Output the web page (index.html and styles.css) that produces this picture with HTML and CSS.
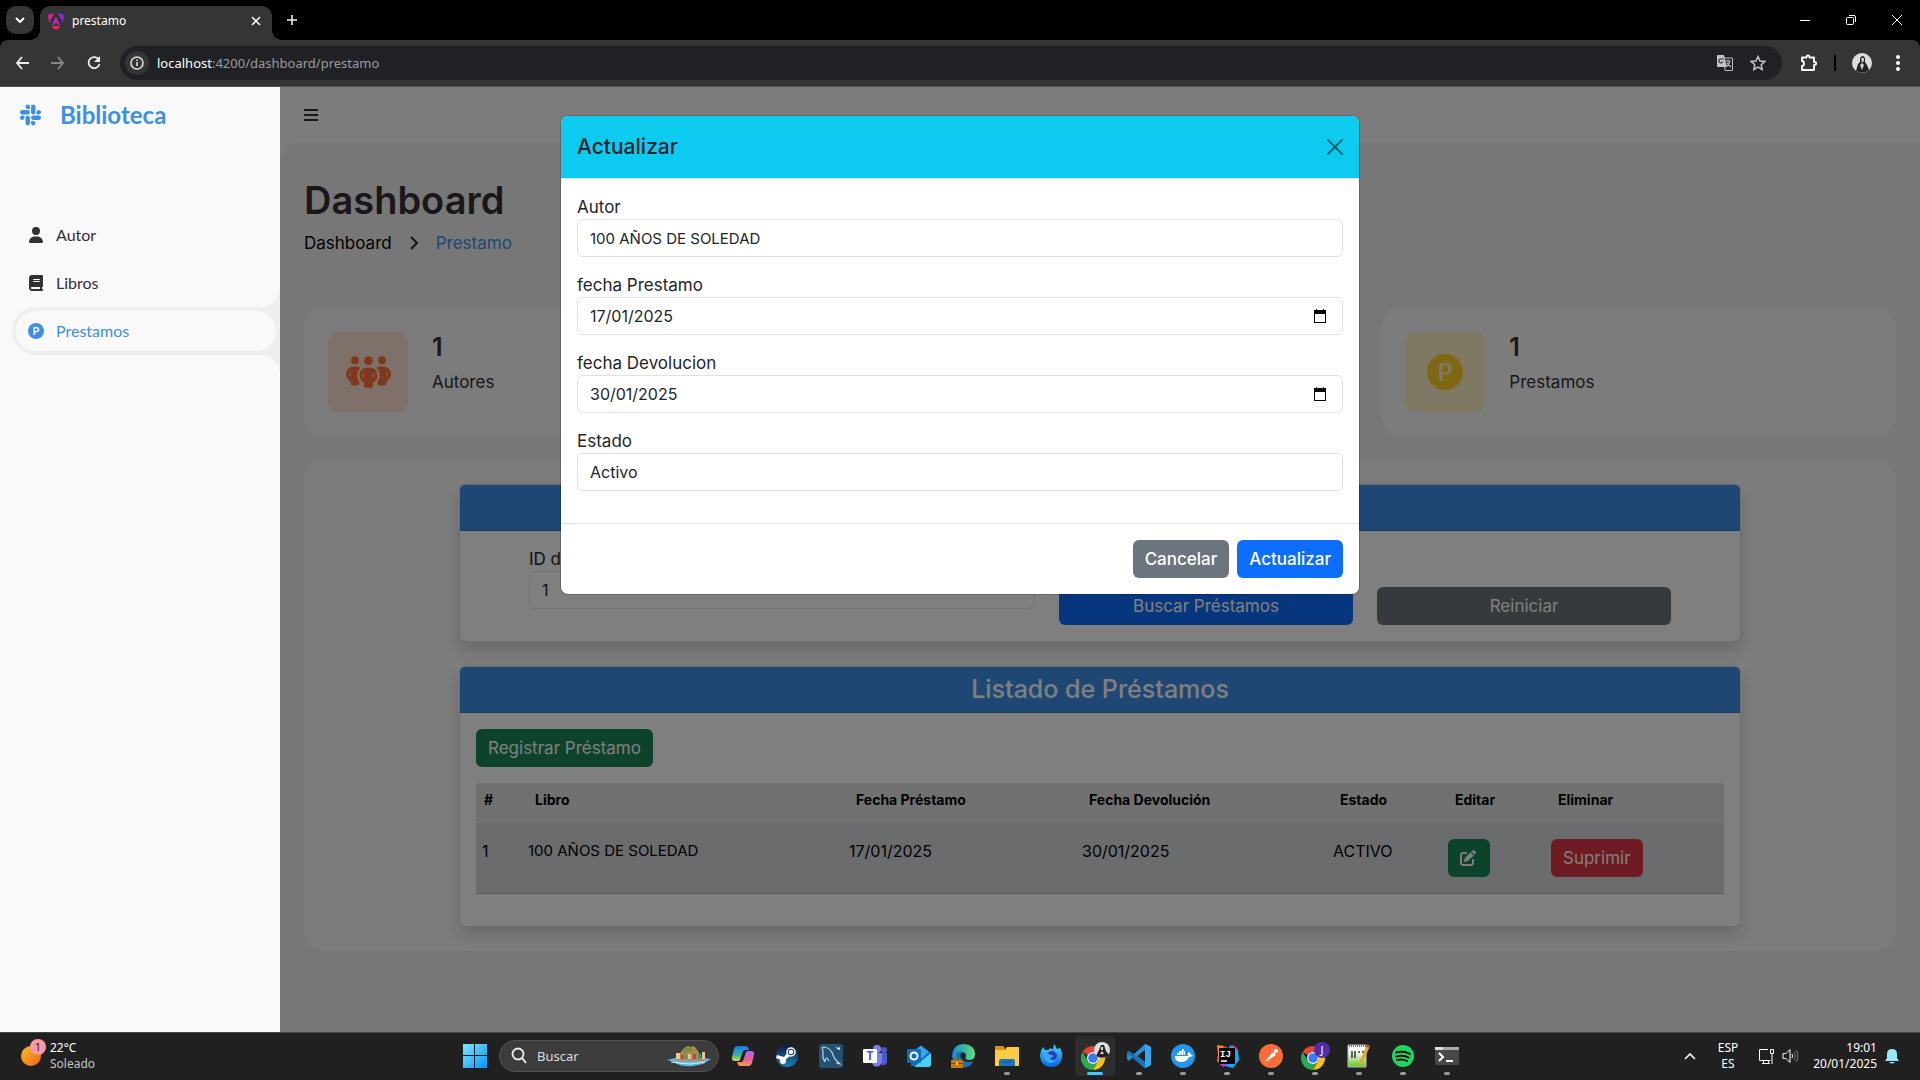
FILE: index.html
```html
<!DOCTYPE html>
<html lang="es">
<head>
<meta charset="utf-8">
<meta name="viewport" content="width=device-width, initial-scale=1">
<title>prestamo</title>
<link rel="stylesheet" href="styles.css">
</head>
<body>
<header class="browser">
  <div class="tabstrip">
    <button class="tab-search" aria-label="Buscar pestañas"><svg width="10" height="6" viewBox="0 0 10 6"><path d="M1 1l4 4 4-4" fill="none" stroke="#fff" stroke-width="2"/></svg></button>
    <div class="tab">
      <svg width="18" height="18" viewBox="0 0 18 18"><defs><linearGradient id="ng" x1="0" x2="1"><stop offset="0" stop-color="#f0168a"/><stop offset=".5" stop-color="#e01cc8"/><stop offset="1" stop-color="#6a2cf5"/></linearGradient></defs><path d="M7 1 1 3l1 8 5-10zM11 1l6 2-1 8L11 1zM9 5l-4 8h2l1-2h2l1 2h2L9 5z" fill="url(#ng)"/><path d="M5 14h8l-1 2-3 2-3-2z" fill="#fb1e50"/></svg>
      <span class="tab-title">prestamo</span>
      <button class="plain" aria-label="Cerrar pestaña"><svg width="10" height="10" viewBox="0 0 10 10"><path d="M1 1l8 8M9 1L1 9" stroke="#eee" stroke-width="1.6"/></svg></button>
    </div>
    <button class="plain new-tab" aria-label="Nueva pestaña"><svg width="12" height="12" viewBox="0 0 12 12"><path d="M6 1v10M1 6h10" stroke="#eee" stroke-width="1.6"/></svg></button>
    <div class="window-buttons">
      <button class="plain" aria-label="Minimizar"><svg width="12" height="12" viewBox="0 0 12 12"><path d="M1 6.500h10" stroke="#fff"/></svg></button>
      <button class="plain" aria-label="Restaurar"><svg width="12" height="12" viewBox="0 0 12 12"><g fill="none" stroke="#fff"><rect x="1.500" y="3.500" width="7" height="7" rx="1"/><path d="M4 1.500h5q1.500 0 1.500 1.500v5"/></g></svg></button>
      <button class="plain" aria-label="Cerrar"><svg width="12" height="12" viewBox="0 0 12 12"><path d="M1 1l10 10M11 1L1 11" stroke="#fff"/></svg></button>
    </div>
  </div>
  <div class="toolbar">
    <button class="plain tool" aria-label="Atrás"><svg width="14" height="14" viewBox="0 0 14 14"><path d="M7 1L2 7l5 6M2 7h12" fill="none" stroke="#eee" stroke-width="1.800"/></svg></button>
    <button class="plain tool" aria-label="Adelante"><svg width="14" height="14" viewBox="0 0 14 14"><path d="M7 1l5 6-5 6M12 7H0" fill="none" stroke="#888" stroke-width="1.800"/></svg></button>
    <button class="plain tool" aria-label="Recargar"><svg width="14" height="14" viewBox="0 0 14 14"><path d="M12 4A5.500 5.500 0 1 0 12.500 8" fill="none" stroke="#eee" stroke-width="1.800"/><path d="M13 0v6H7z" fill="#eee"/></svg></button>
    <div class="omnibox">
      <span class="site-info"><svg width="14" height="14" viewBox="0 0 14 14"><circle cx="7" cy="7" r="6" fill="none" stroke="#ddd" stroke-width="1.600"/><path d="M7 6v4M7 3.500v1.500" stroke="#ddd" stroke-width="1.600"/></svg></span>
      <span class="url"><b>localhost</b>:4200/dashboard/prestamo</span>
      <svg width="18" height="18" viewBox="0 0 18 18"><path d="M8 4h8.500v12.500H9z" fill="none" stroke="#bbb"/><path d="M1 1h7l3 12H2q-1 0-1-1z" fill="#c4c4c4"/><path d="M8 5H5.500a2 2 0 1 0 1 3H6" fill="none" stroke="#333" stroke-width="1.200"/><path d="M9.500 7h5M12 5.500v2M14 7q-1 4-4 6M11 9l4 4" stroke="#bbb" fill="none" stroke-width="1.200"/></svg>
      <svg width="16" height="16" viewBox="0 0 16 16"><path d="M8 1.500l2 4.500 4.800.5-3.600 3.200 1 4.800L8 12l-4.200 2.500 1-4.800L1.200 6.500 6 6z" fill="none" stroke="#c4c4c4" stroke-width="1.500"/></svg>
    </div>
    <div class="toolbar-end">
      <svg width="18" height="18" viewBox="0 0 18 18"><path d="M2 3.500h4.500q0-2 1.500-2t1.500 2H14V8q2.200 0 2.200 1.500T14 11v5H2v-4q2 0 2-2.500T2 7z" fill="none" stroke="#fff" stroke-width="1.800" stroke-linejoin="round"/></svg>
      <span class="divider"></span>
      <svg width="20" height="20" viewBox="0 0 20 20"><circle cx="10" cy="10" r="10" fill="#ddd"/><path d="M4 18l2-7 2-2V5q3-4 5 0v4l2 3 2 5q-6 5-13 1z" fill="#222"/><path d="M9 5h3v3l-2 2zM8 12l2-2 2 2-2 5z" fill="#ccc"/></svg>
      <svg width="4" height="16" viewBox="0 0 4 16" fill="#fff"><circle cx="2" cy="2" r="2"/><circle cx="2" cy="8" r="2"/><circle cx="2" cy="14" r="2"/></svg>
    </div>
  </div>
</header>

<div class="app">
  <aside class="sidebar">
    <a class="brand" href="#"><svg width="21" height="24" viewBox="0 0 448 512" fill="currentColor"><path d="M94.120 315.100c0 25.900-21.160 47.060-47.060 47.060S0 341 0 315.100c0-25.900 21.160-47.060 47.060-47.060h47.060v47.060zm23.720 0c0-25.900 21.160-47.060 47.060-47.060s47.060 21.160 47.060 47.060v117.840c0 25.900-21.160 47.060-47.060 47.060s-47.060-21.160-47.060-47.060V315.100zm47.060-188.980c-25.900 0-47.060-21.160-47.060-47.060S139 32 164.900 32s47.060 21.160 47.060 47.060v47.060H164.900zm0 23.720c25.900 0 47.060 21.160 47.060 47.060s-21.160 47.060-47.060 47.060H47.060C21.160 243.960 0 222.800 0 196.900s21.160-47.060 47.060-47.060H164.900zm188.980 47.060c0-25.900 21.160-47.060 47.060-47.060 25.900 0 47.060 21.160 47.060 47.060s-21.160 47.060-47.060 47.060h-47.060V196.900zm-23.720 0c0 25.900-21.160 47.060-47.060 47.060-25.900 0-47.060-21.160-47.060-47.060V79.060c0-25.900 21.160-47.060 47.060-47.060 25.900 0 47.060 21.160 47.060 47.060V196.900zM283.100 385.880c25.900 0 47.060 21.160 47.060 47.060 0 25.900-21.160 47.060-47.060 47.060-25.900 0-47.060-21.160-47.060-47.060v-47.060h47.060zm0-23.720c-25.900 0-47.060-21.160-47.060-47.060 0-25.900 21.160-47.060 47.060-47.060h117.840c25.900 0 47.060 21.160 47.060 47.060 0 25.900-21.160 47.060-47.060 47.060H283.100z"/></svg><span>Biblioteca</span></a>
    <ul class="menu">
      <li><a href="#"><svg width="16" height="16" viewBox="-32 0 512 512" fill="currentColor"><path d="M224 256A128 128 0 1 0 224 0a128 128 0 1 0 0 256zm-45.700 48C79.800 304 0 383.800 0 482.300C0 498.700 13.300 512 29.700 512H418.300c16.400 0 29.700-13.300 29.700-29.700C448 383.800 368.200 304 269.700 304H178.300z"/></svg>Autor</a></li>
      <li><a href="#"><svg width="16" height="16" viewBox="-32 0 512 512" fill="currentColor"><path d="M96 0C43 0 0 43 0 96V416c0 53 43 96 96 96H384h32c17.700 0 32-14.300 32-32s-14.300-32-32-32V384c17.700 0 32-14.300 32-32V32c0-17.700-14.300-32-32-32H384 96zm0 384H352v64H96c-17.700 0-32-14.300-32-32s14.300-32 32-32zm32-240c0-8.800 7.200-16 16-16H336c8.800 0 16 7.200 16 16s-7.200 16-16 16H144c-8.800 0-16-7.200-16-16zm16 48H336c8.800 0 16 7.200 16 16s-7.200 16-16 16H144c-8.800 0-16-7.200-16-16s7.200-16 16-16z"/></svg>Libros</a></li>
      <li class="active"><a href="#"><svg width="16" height="16" viewBox="0 0 16 16"><circle cx="8" cy="8" r="8" fill="currentColor"/><text x="8" y="12" class="p-glyph" fill="#f9f9f9">P</text></svg>Prestamos</a></li>
    </ul>
  </aside>

  <div class="content">
    <nav class="topbar"><button class="plain" aria-label="Menú"><svg width="14" height="12" viewBox="0 0 14 12"><path d="M0 1h14M0 6h14M0 11h14" stroke="#342e37" stroke-width="2"/></svg></button></nav>
    <main>
      <h1>Dashboard</h1>
      <div class="breadcrumb"><a href="#">Dashboard</a><svg width="8" height="14" viewBox="0 0 8 14"><path d="M1 1l6 6-6 6" fill="none" stroke="#342e37" stroke-width="2"/></svg><a class="current" href="#">Prestamo</a></div>

      <ul class="stats">
        <li><span class="stat-icon orange"><svg width="45" height="36" viewBox="0 0 640 512" fill="currentColor"><path d="M72 88a56 56 0 1 1 112 0A56 56 0 1 1 72 88zM64 245.700C54 256.900 48 271.800 48 288s6 31.100 16 42.300V245.700zm144.400-49.300C178.700 222.700 160 261.200 160 304c0 34.300 12 65.800 32 90.500V416c0 17.700-14.300 32-32 32H96c-17.700 0-32-14.300-32-32V389.200C26.200 371.200 0 332.700 0 288c0-61.900 50.100-112 112-112h32c24 0 46.200 7.500 64.400 20.300zM448 416V394.500c20-24.700 32-56.200 32-90.500c0-42.800-18.700-81.300-48.400-107.700C449.800 183.500 472 176 496 176h32c61.900 0 112 50.100 112 112c0 44.700-26.200 83.200-64 101.200V416c0 17.700-14.300 32-32 32H480c-17.700 0-32-14.300-32-32zm8-328a56 56 0 1 1 112 0A56 56 0 1 1 456 88zM576 245.700v84.700c10-11.300 16-26.100 16-42.300s-6-31.100-16-42.300zM320 32a64 64 0 1 1 0 128 64 64 0 1 1 0-128zM240 304c0 16.200 6 31 16 42.300V261.700c-10 11.300-16 26.100-16 42.300zm144-42.300v84.700c10-11.300 16-26.100 16-42.300s-6-31.100-16-42.300zM448 304c0 44.700-26.200 83.200-64 101.200V448c0 17.700-14.300 32-32 32H288c-17.700 0-32-14.300-32-32V405.200c-37.800-18-64-56.500-64-101.200c0-61.900 50.100-112 112-112h32c61.900 0 112 50.100 112 112z"/></svg></span><div><h3>1</h3><p>Autores</p></div></li>
        <li></li>
        <li><span class="stat-icon yellow"><svg width="36" height="36" viewBox="0 0 16 16"><circle cx="8" cy="8" r="8" fill="currentColor"/><text x="8" y="12" class="p-glyph" fill="#fff2c6">P</text></svg></span><div><h3>1</h3><p>Prestamos</p></div></li>
      </ul>

      <section class="panel">
        <div class="card">
          <h4 class="card-header">Buscar Préstamos</h4>
          <form class="search-form">
            <div class="field search-id"><label for="libro-id">ID del Libro</label><input id="libro-id" class="control" type="text" value="1"></div>
            <button type="button" class="btn primary">Buscar Préstamos</button>
            <button type="button" class="btn secondary">Reiniciar</button>
          </form>
        </div>
        <div class="card">
          <h4 class="card-header">Listado de Préstamos</h4>
          <div class="card-body">
            <button type="button" class="btn success">Registrar Préstamo</button>
            <table>
              <colgroup><col class="c-num"><col class="c-book"><col class="c-loan"><col class="c-return"><col class="c-state"><col class="c-edit"><col></colgroup>
              <thead><tr><th>#</th><th>Libro</th><th>Fecha Préstamo</th><th>Fecha Devolución</th><th>Estado</th><th>Editar</th><th>Eliminar</th></tr></thead>
              <tbody><tr><td>1</td><td class="caps">100 AÑOS DE SOLEDAD</td><td>17/01/2025</td><td>30/01/2025</td><td>ACTIVO</td>
                <td><button type="button" class="btn success" aria-label="Editar"><svg width="16" height="16" viewBox="0 0 512 512" fill="currentColor"><path d="M471.600 21.700c-21.900-21.900-57.300-21.900-79.200 0L362.300 51.700l97.900 97.900 30.100-30.100c21.900-21.900 21.900-57.300 0-79.200L471.600 21.700zm-299.200 220c-6.100 6.100-10.800 13.600-13.500 21.900l-29.600 88.800c-2.900 8.600-.6 18.100 5.800 24.600s15.900 8.700 24.600 5.800l88.800-29.600c8.200-2.700 15.700-7.400 21.900-13.500L437.700 172.300 339.700 74.300 172.400 241.700zM96 64C43 64 0 107 0 160V416c0 53 43 96 96 96H352c53 0 96-43 96-96V320c0-17.700-14.300-32-32-32s-32 14.300-32 32v96c0 17.700-14.300 32-32 32H96c-17.700 0-32-14.300-32-32V160c0-17.700 14.300-32 32-32h96c17.700 0 32-14.300 32-32s-14.300-32-32-32H96z"/></svg></button></td>
                <td><button type="button" class="btn danger">Suprimir</button></td></tr></tbody>
            </table>
          </div>
        </div>
      </section>
    </main>
  </div>

  <div class="backdrop"></div>
  <div class="modal" role="dialog" aria-labelledby="modal-title">
    <div class="modal-header"><h5 id="modal-title">Actualizar</h5><button class="plain" aria-label="Cerrar"><svg width="16" height="16" viewBox="0 0 16 16"><path d="M1 1l14 14M15 1L1 15" stroke="#000" stroke-width="2" stroke-linecap="round" opacity=".5"/></svg></button></div>
    <form class="modal-body">
      <div class="field"><label for="autor">Autor</label><input id="autor" class="control caps" type="text" value="100 AÑOS DE SOLEDAD"></div>
      <div class="field date"><label for="f-prestamo">fecha Prestamo</label><input id="f-prestamo" class="control" type="text" inputmode="numeric" value="17/01/2025"><svg width="14" height="16" viewBox="0 0 14 16"><path d="M3 1h1v1h6V1h1v1h2v13H1V2h2z M2 6v8h10V6z" fill="#000" fill-rule="evenodd"/></svg></div>
      <div class="field date"><label for="f-devolucion">fecha Devolucion</label><input id="f-devolucion" class="control" type="text" inputmode="numeric" value="30/01/2025"><svg width="14" height="16" viewBox="0 0 14 16"><path d="M3 1h1v1h6V1h1v1h2v13H1V2h2z M2 6v8h10V6z" fill="#000" fill-rule="evenodd"/></svg></div>
      <div class="field"><label for="estado">Estado</label><input id="estado" class="control" type="text" value="Activo"></div>
    </form>
    <div class="modal-footer"><button type="button" class="btn secondary">Cancelar</button><button type="button" class="btn primary">Actualizar</button></div>
  </div>
</div>

<footer class="taskbar">
  <div class="weather">
    <svg width="28" height="30" viewBox="0 0 28 30"><defs><linearGradient id="sun" x2="1" y2="1"><stop offset="0" stop-color="#fcc02c"/><stop offset="1" stop-color="#f0620f"/></linearGradient></defs><circle cx="11" cy="18" r="10" fill="url(#sun)"/><circle cx="18" cy="9" r="8" fill="#ff99a4"/><text x="18" y="13" class="badge-text" fill="#222">1</text></svg>
    <div><div>22°C</div><div class="muted">Soleado</div></div>
  </div>
  <div class="task-center">
    <button class="task" aria-label="Inicio"><svg width="24" height="24" viewBox="0 0 24 24"><defs><linearGradient id="win" x2="1" y2="1"><stop offset="0" stop-color="#7ce8ff"/><stop offset="1" stop-color="#0a92f8"/></linearGradient></defs><path d="M0 0h11v11H0zM12 0h12v11H12zM0 12h11v12H0zM12 12h12v12H12z" fill="url(#win)"/></svg></button>
    <div class="task-search"><svg width="16" height="18" viewBox="0 0 16 18"><circle cx="7" cy="7" r="5.500" fill="none" stroke="#eee" stroke-width="1.800"/><path d="M11 11l4 5" stroke="#eee" stroke-width="2"/></svg><span>Buscar</span>
      <svg width="46" height="22" viewBox="0 0 46 22"><path d="M1 15l8-2 12-1 16 1 8 1-3 2-5 3-10 2q-10 1-16-2l-3-2z" fill="#59b9e8"/><path d="M9 14l5-6 4-5 4-2 3 1 3-1 4 5 4 8z" fill="#a58d52"/><path d="M18 3l4-2 3 1 2 5-5-1-4 3z" fill="#7f8a45"/><path d="M10 8h4v6h-4zM22 9h3v5h-3zM36 7h3v7h-3z" fill="#e8c4a0"/><path d="M15 10h3v5h-3zM27 9h3v6h-3z" fill="#c9413a"/><path d="M19 10h2v5h-2zM32 9h3v6h-3z" fill="#3f9b7a"/><path d="M8 14h32l-3 2H12z" fill="#c78450"/><path d="M5 17l8 1 12 1 14-2" stroke="#d5f0fa" fill="none"/></svg></div>
    <button class="task" aria-label="Copilot"><svg width="24" height="24" viewBox="0 0 24 24"><defs><linearGradient id="c1" y2="1" x2="0"><stop offset="0" stop-color="#1877e8"/><stop offset=".6" stop-color="#31b7a4"/><stop offset="1" stop-color="#e4d03d"/></linearGradient><linearGradient id="c2" y2="1" x2="0"><stop offset="0" stop-color="#a667f0"/><stop offset=".6" stop-color="#ef5d90"/><stop offset="1" stop-color="#fb9d56"/></linearGradient></defs><path d="M6 2h9q2 0 3 4h-4q-2 0-3 4l-2 6q-1 1-2 1H4q-4 0-3-4L3 5q1-3 3-3z" fill="url(#c1)"/><path d="M18 22H9q-2 0-3-4h4q2 0 3-4l2-6q1-1 2-1h3q4 0 3 4l-2 8q-1 3-3 3z" fill="url(#c2)"/></svg></button>
    <button class="task" aria-label="Steam"><svg width="24" height="24" viewBox="0 0 24 24"><defs><linearGradient id="st" x2="0" y2="1"><stop offset="0" stop-color="#111d3c"/><stop offset="1" stop-color="#1780b9"/></linearGradient></defs><circle cx="12" cy="12" r="11" fill="url(#st)"/><path d="M1 14l8 3 7-6-3-3-4 5-7-2z" fill="#fff"/><circle cx="16" cy="8" r="4" fill="#16325c" stroke="#fff" stroke-width="1.500"/><circle cx="16" cy="8" r="2.300" fill="#fff"/><circle cx="8" cy="17" r="3" fill="#fff"/></svg></button>
    <button class="task" aria-label="MySQL Workbench"><svg width="24" height="24" viewBox="0 0 24 24"><rect width="24" height="24" rx="3" fill="#245273"/><path d="M6 18l-2-4V6q-2-3 1-3 7 1 9 8l2 4 5 5-4-1M6 18q0-4 2-4l2 3" fill="none" stroke="#bcd6e6" stroke-width="1.200"/><path d="M17 2l2 2 2-1v3l-3-1z" fill="#dcebf3"/></svg></button>
    <button class="task" aria-label="Teams"><svg width="24" height="24" viewBox="0 0 24 24"><circle cx="14" cy="5" r="4" fill="#7b83eb"/><circle cx="21" cy="6" r="3" fill="#5059c9"/><path d="M17 9h7v9q-1 4-5 3z" fill="#5059c9"/><path d="M8 9h11v9q-2 6-8 4l-3-4z" fill="#7b83eb"/><rect y="5" width="14" height="14" rx="1" fill="#fff"/><text x="7" y="16" class="logo-text" fill="#5059c9">T</text></svg></button>
    <button class="task" aria-label="Outlook"><svg width="24" height="24" viewBox="0 0 24 24"><path d="M4 9l10-8 10 8v13H4z" fill="#1267b4"/><path d="M4 9l10-7 8 6-8 7z" fill="#36a8e8"/><path d="M24 9v11q0 3-3 3H7l17-14z" fill="#42d2f8"/><rect y="5" width="14" height="14" rx="1" fill="#0f6cbd"/><circle cx="7" cy="12" r="3.500" fill="none" stroke="#fff" stroke-width="2"/></svg></button>
    <button class="task" aria-label="Edge"><svg width="24" height="24" viewBox="0 0 24 24"><defs><linearGradient id="ed" x2="1"><stop offset="0" stop-color="#1688d4"/><stop offset="1" stop-color="#5de07a"/></linearGradient></defs><path d="M1 12Q2 0 13 0q11 1 11 10 0 6-6 6-5 0-3-4 0-4-5-4-6 1-5 9-4-1-4-5z" fill="url(#ed)"/><path d="M5 12q1-5 6-4-4 5 2 9 5 2 9 0-3 8-12 6-6-3-5-11z" fill="#1674bd"/><path d="M0 16h12v8H0z" fill="#c97812"/><path d="M4 16v-2h4v2" stroke="#a95f0c" fill="none"/><path d="M0 19h12v1H0z" fill="#7c480d"/><rect x="5" y="18" width="2" height="3" fill="#ffd34d"/></svg></button>
    <button class="task running" aria-label="Explorador"><svg width="24" height="24" viewBox="0 0 24 24"><path d="M0 2h8l2 2v4H0z" fill="#d99413"/><path d="M0 6h10l2-3h12v19H0z" fill="#fbcb47"/><path d="M4 22v-5q0-2 2-2h12q2 0 2 2v5z" fill="#1b75bb"/><path d="M8 18h8" stroke="#0d4f8c"/></svg></button>
    <button class="task" aria-label="Firefox"><svg width="24" height="24" viewBox="0 0 24 24"><defs><linearGradient id="ff" x2="0" y2="1"><stop offset="0" stop-color="#46d5ff"/><stop offset="1" stop-color="#0868e8"/></linearGradient></defs><path d="M1 12Q1 7 4 3l2 3h3l3-2 2 2 1-6 3 5 3-1q3 4 2 10-2 9-11 9Q2 23 1 12z" fill="url(#ff)"/><circle cx="13" cy="12" r="5" fill="#2a3fb5"/><path d="M5 9q4 0 7 2l3 1q-3 1-4 3 3 2 6 0-3 6-9 3-4-3-3-9z" fill="#35aaf7"/></svg></button>
    <button class="task running current" aria-label="Chrome"><svg width="32" height="28" viewBox="0 0 32 28"><path d="M14 4a12 12 0 0 1 10.400 6H14a6 6 0 0 0-5.200 3L3.600 10A12 12 0 0 1 14 4z" fill="#e54335"/><path d="M24.400 10A12 12 0 0 1 14 28l5.200-9a6 6 0 0 0 0-6L18 10z" fill="#fbc116"/><path d="M3.600 10A12 12 0 0 0 14 28l5.200-9a6 6 0 0 1-10.400 0z" fill="#2da94f"/><circle cx="14" cy="16" r="6" fill="#fff"/><circle cx="14" cy="16" r="4.800" fill="#3a7cf0"/><circle cx="23" cy="8" r="8" fill="#ddd"/><path d="M17 14l3-6 2-5h3l2 6 3 4q-6 5-13 1z" fill="#222"/><path d="M22 5h2v3h-2zM21 12l2-3 2 3z" fill="#ddd"/></svg></button>
    <button class="task running" aria-label="Visual Studio Code"><svg width="24" height="24" viewBox="0 0 24 24"><path d="M18 0l6 3v18l-6 3L6 13l-4 4-2-2V9l2-2 4 4zM18 6l-8 6 8 6z" fill="#2490dc" fill-rule="evenodd"/><path d="M2 7L0 9l16 14 2 1v-6z" fill="#1474b8"/><path d="M18 0l6 3v18l-6 3z" fill="#35a7ef"/></svg></button>
    <button class="task running" aria-label="Docker"><svg width="24" height="24" viewBox="0 0 24 24"><circle cx="12" cy="12" r="12" fill="#2396ed"/><path d="M4 12h13q-1-3 1-4 2 1 2 3l2 0q-1 2-4 2-2 5-8 5-6 0-6-6z" fill="#fff"/><path d="M6 10h8M8 8h6M11 6h2" stroke="#fff" stroke-width="1.800" stroke-dasharray="1.800 .5"/></svg></button>
    <button class="task running" aria-label="IntelliJ IDEA"><svg width="24" height="24" viewBox="0 0 24 24"><path d="M2 1l7 1-2 20-5-5 1-6z" fill="#fd8225"/><path d="M9 2l4 2 5-3 4 3v9H4z" fill="#ef2d67"/><path d="M15 1l8 5 1 10-6 8-8-2z" fill="#16a9f7"/><path d="M2 15l6 8 6-3z" fill="#a33ff0"/><rect x="4" y="4" width="16" height="16" fill="#090909"/><text x="5" y="13" class="mono" fill="#fff">IJ</text><path d="M6 17h6" stroke="#fff" stroke-width="1.500"/></svg></button>
    <button class="task running" aria-label="Postman"><svg width="24" height="24" viewBox="0 0 24 24"><circle cx="12" cy="12" r="12" fill="#ff6c37"/><path d="M6 18l9-9 2 2z" fill="#fff"/><path d="M13 9l4-1-6 7-5 3z" fill="#fff"/><circle cx="17" cy="7" r="2" fill="#fff"/></svg></button>
    <button class="task running" aria-label="Chrome J"><svg width="32" height="28" viewBox="0 0 32 28"><path d="M14 4a12 12 0 0 1 10.400 6H14a6 6 0 0 0-5.200 3L3.600 10A12 12 0 0 1 14 4z" fill="#e54335"/><path d="M24.400 10A12 12 0 0 1 14 28l5.200-9a6 6 0 0 0 0-6L18 10z" fill="#fbc116"/><path d="M3.600 10A12 12 0 0 0 14 28l5.200-9a6 6 0 0 1-10.400 0z" fill="#2da94f"/><circle cx="14" cy="16" r="6" fill="#fff"/><circle cx="14" cy="16" r="4.800" fill="#3a7cf0"/><circle cx="23" cy="8" r="8" fill="#512da8"/><text x="23" y="12" class="badge-text" fill="#fff">J</text></svg></button>
    <button class="task running" aria-label="Notepad++"><svg width="24" height="24" viewBox="0 0 24 24"><defs><linearGradient id="np" x2="0" y2="1"><stop offset=".3" stop-color="#fff"/><stop offset="1" stop-color="#63c61c"/></linearGradient></defs><path d="M1 1h18v22H1z" fill="url(#np)" stroke="#bbb"/><path d="M2 2h17" stroke="#777" stroke-dasharray="1 1" stroke-width="2"/><path d="M5 7v7M8 7v7M11 8h2M15 8h2" stroke="#333" stroke-width="1.500"/><path d="M20 1l3 1-7 16-3 2v-4z" fill="#e6a72c"/><path d="M20 0l3 2-1 2-3-1z" fill="#c24b4b"/></svg></button>
    <button class="task running" aria-label="Spotify"><svg width="24" height="24" viewBox="0 0 24 24"><circle cx="12" cy="12" r="11" fill="#1ed760"/><path d="M5 8.500q8-2 14 1.500M5.500 12.500q7-2 12 1M6 16q6-1.500 10 1" fill="none" stroke="#121212" stroke-width="2" stroke-linecap="round"/></svg></button>
    <button class="task running" aria-label="Terminal"><svg width="24" height="24" viewBox="0 0 24 24"><rect y="3" width="24" height="18" rx="1" fill="#484848"/><path d="M0 3h24v3H0z" fill="#aaa"/><path d="M0 3h8v3H0z" fill="#ddd"/><path d="M4 9l4 4-4 4M11 17h7" fill="none" stroke="#fff" stroke-width="2"/></svg></button>
  </div>
  <div class="tray">
    <svg width="12" height="7" viewBox="0 0 12 7"><path d="M1 6l5-5 5 5" fill="none" stroke="#fff" stroke-width="1.600"/></svg>
    <div class="lang"><div>ESP</div><div>ES</div></div>
    <div class="tray-icons"><svg width="17" height="17" viewBox="0 0 17 17" fill="none" stroke="#fff"><path d="M10 1.500H1.500v11h11M4 15.500h8M5.500 13v2M10.500 13v2M12.500 1.500h3v4h-3zM14 6v10"/></svg><svg width="17" height="16" viewBox="0 0 17 16" fill="none"><path d="M1 5.500h3l4-4v13l-4-4H1z" stroke="#fff"/><path d="M10 6q1 2 0 4" stroke="#fff"/><path d="M12 4q3 4 0 8M14 2q4 6 0 12" stroke="#777"/></svg></div>
    <div class="clock"><div>19:01</div><div>20/01/2025</div></div>
    <svg width="14" height="16" viewBox="0 0 14 16" fill="#97e8fb"><path d="M2 6q0-5 5-5t5 5v4l2 3H0l2-3zM4 14h6q-3 3-6 0z"/></svg>
  </div>
</footer>
</body>
</html>
```
FILE: styles.css
```css
*, *::before, *::after { box-sizing: border-box; }
body {
  margin: 0;
  min-height: 100vh;
  display: flex;
  flex-direction: column;
  background: #eee;
  color: #212529;
  font: 16px/24px "Inter", sans-serif;
}
h1, h3, h4, h5, p, ul { margin: 0; padding: 0; }
ul { list-style: none; }
a { text-decoration: none; color: inherit; }
button, input { font: inherit; }
svg { display: block; flex: none; }
.plain { background: none; border: 0; padding: 0; display: grid; place-items: center; }

/* Browser window */
.browser { background: #000; color: #fff; font: 12px/16px "Noto Sans", sans-serif; }
.tabstrip { display: flex; align-items: center; height: 40px; padding: 6px 0 0 6px; }
.tab-search { width: 28px; height: 28px; margin-bottom: 6px; border: 0; padding: 0; border-radius: 10px; background: #353535; display: grid; place-items: center; }
.tab { position: relative; display: flex; align-items: center; gap: 7px; width: 232px; height: 34px; margin-left: 6px; padding: 0 11px 4px 7px; background: #353535; border-radius: 10px 10px 0 0; }
.tab::before, .tab::after { content: ""; position: absolute; bottom: 0; width: 10px; height: 10px; }
.tab::before { right: 100%; background: radial-gradient(circle at 0 0, transparent 10px, #353535 10px); }
.tab::after { left: 100%; background: radial-gradient(circle at 100% 0, transparent 10px, #353535 10px); }
.tab-title { flex: 1; }
.new-tab { width: 28px; height: 28px; margin: 0 0 6px 6px; }
.window-buttons { display: flex; margin: 0 0 6px auto; }
.window-buttons .plain { width: 46px; height: 28px; }
.toolbar { display: flex; align-items: center; height: 47px; padding: 0 20px 1px 4px; background: #353535; border-bottom: 1px solid #545454; border-radius: 8px 8px 0 0; }
.tool { width: 36px; height: 34px; }
.omnibox { flex: 1; display: flex; align-items: center; gap: 16px; height: 34px; margin-left: 8px; padding: 0 16px 0 5px; background: #202124; border-radius: 17px; font-size: 13px; }
.site-info { display: grid; place-items: center; width: 24px; height: 24px; margin-right: -8px; border-radius: 12px; background: #353535; }
.url { flex: 1; color: #9a9da0; }
.url b { font-weight: 400; color: #fff; }
.toolbar-end { display: flex; align-items: center; gap: 16px; margin-left: 18px; }
.toolbar-end svg:last-child { margin-left: 8px; }
.divider { width: 2px; height: 16px; background: #000; }

/* Application shell */
.app { position: relative; flex: 1; display: flex; }
.sidebar { position: relative; z-index: 3; width: 280px; flex: none; background: #f9f9f9; color: #342e37; font-family: "Lato", sans-serif; }
.brand { display: flex; align-items: center; gap: 19px; height: 56px; padding-left: 20px; color: #3c91e6; font-size: 24px; font-weight: 700; }
.menu { margin-top: 68px; padding-left: 12px; }
.menu li { position: relative; height: 48px; padding: 4px; }
.menu a { display: flex; align-items: center; gap: 12px; height: 40px; padding-left: 12px; border-radius: 20px; }
.menu .active { background: #eee; border-radius: 24px 0 0 24px; }
.menu .active a { background: #f9f9f9; color: #3c91e6; }
.menu .active::before, .menu .active::after { content: ""; position: absolute; right: 0; width: 20px; height: 20px; }
.menu .active::before { bottom: 100%; background: radial-gradient(circle at 0 0, transparent 20px, #eee 20px); }
.menu .active::after { top: 100%; background: radial-gradient(circle at 0 100%, transparent 20px, #eee 20px); }
.p-glyph { font: 700 11px "Lato", sans-serif; text-anchor: middle; }

.content { flex: 1; min-width: 0; background: #f9f9f9; }
.topbar { display: flex; align-items: center; height: 56px; padding-left: 24px; }
main { min-height: calc(100% - 56px); padding: 36px 24px; background: #eee; border-radius: 20px 0 0 0; }
h1 { font-size: 38px; line-height: 42px; font-weight: 600; color: #342e37; margin-bottom: 10px; }
.breadcrumb { display: flex; align-items: center; gap: 18px; color: #000; font-size: 17px; }
.breadcrumb .current { color: #3c91e6; }
.stats { display: grid; grid-template-columns: repeat(3, 1fr); gap: 24px; margin-top: 53px; color: #342e37; font-size: 17px; }
.stats li { display: flex; align-items: flex-start; gap: 24px; min-height: 128px; padding: 24px; background: #f9f9f9; border-radius: 20px; }
.stat-icon { display: grid; place-items: center; width: 80px; height: 80px; border-radius: 10px; }
.orange { background: #ffe0d3; color: #fd7238; }
.yellow { background: #fff2c6; color: #ffce26; }
h3 { font-size: 25px; line-height: 30px; font-weight: 600; margin-bottom: 8px; }
.panel { display: flex; flex-direction: column; gap: 24px; margin-top: 24px; padding: 24px; background: #f9f9f9; border-radius: 20px; }
.card { width: 100%; max-width: 1282px; margin: 0 auto; background: #fff; border: 1px solid #dadada; border-radius: 6px; box-shadow: 0 8px 16px rgba(0, 0, 0, .15); }
.card-header { padding: 8px 16px; background: #3c91e6; color: #fff; border-bottom: 1px solid #3279c0; border-radius: 5px 5px 0 0; font-size: 25px; line-height: 29px; font-weight: 500; text-align: center; }
.search-form { display: grid; grid-template-columns: repeat(11, 1fr); column-gap: 24px; align-items: end; padding: 16px 69px; }
.search-id { grid-column: span 5; }
.search-form .btn { grid-column: span 3; }
.card-body { padding: 16px 16px 32px; }

/* Controls */
.field { position: relative; display: flex; flex-direction: column; margin-bottom: 16px; }
.field label { font-size: 17px; }
.control { width: 100%; height: 38px; padding: 6px 12px; color: #212529; background: #fff; border: 1px solid #dee2e6; border-radius: 6px; }
.caps { font-size: 15px; }
.date svg { position: absolute; right: 16px; bottom: 11px; }
.btn { height: 38px; padding: 0 12px; border: 0; border-radius: 6px; color: #fff; font-size: 17px; }
.primary { background: #0d6efd; }
.secondary { background: #6c757d; }
.success { background: #198754; }
.danger { background: #dc3545; }

table { width: 100%; margin-top: 16px; table-layout: fixed; border-collapse: separate; border-spacing: 0; color: #000; }
.c-num { width: 46px; }
.c-book { width: 321px; }
.c-loan { width: 233px; }
.c-return { width: 251px; }
.c-state { width: 115px; }
.c-edit { width: 103px; }
th { padding: 7px 0 12px 13px; background: #e2e2e2; border-bottom: 1px solid #ecf0f0; font-size: 14px; line-height: 20px; font-weight: 700; text-align: left; }
th:first-child { padding-left: 8px; }
td { padding: 16px 0 16px 6px; background: #d6d8da; border-bottom: 1px solid #adb5b2; vertical-align: top; }
td .btn { display: block; min-width: 42px; }

/* Dialog */
.backdrop { position: absolute; inset: 0; z-index: 2; background: rgba(0, 0, 0, .5); }
.modal { position: absolute; z-index: 4; top: 28px; left: 0; right: 0; width: 100%; max-width: 800px; margin: 0 auto; background: #fff; background-clip: padding-box; border: 1px solid rgba(0, 0, 0, .175); border-radius: 8px; }
.modal-header { display: flex; align-items: center; justify-content: space-between; padding: 16px; background: #0dcaf0; border-bottom: 1px solid #dee2e6; border-radius: 7px 7px 0 0; }
h5 { font-size: 21px; line-height: 30px; font-weight: 500; }
.modal-body { padding: 16px; }
.modal-footer { display: flex; justify-content: flex-end; gap: 8px; padding: 16px; border-top: 1px solid #dee2e6; }
.modal-footer .btn { font-weight: 500; }

/* Taskbar */
.taskbar { display: grid; grid-template-columns: 1fr auto 1fr; height: 48px; padding-bottom: 1px; background: #202020; border-top: 1px solid #454545; color: #fff; font: 12px/16px "Noto Sans", sans-serif; }
.weather { display: flex; align-items: center; gap: 2px; padding-left: 20px; }
.weather svg { margin-bottom: 6px; }
.muted { color: #c4c4c4; }
.badge-text { font: 11px "Noto Sans", sans-serif; text-anchor: middle; }
.mono { font: 700 9px "Liberation Mono", monospace; }
.logo-text { font: 700 12px "Noto Sans", sans-serif; text-anchor: middle; }
.task-center { display: flex; align-items: center; padding-left: 2px; }
.task { position: relative; display: grid; place-items: center; width: 40px; height: 40px; margin: 0 2px; padding: 0; background: none; border: 0; border-radius: 4px; }
.running::after { content: ""; position: absolute; left: 17px; bottom: 1px; width: 6px; height: 3px; border-radius: 2px; background: #9a9a9a; }
.current.task { background: #2d2d2d; }
.current.task::after { left: 12px; width: 16px; background: #4cc2ff; }
.task-search { display: flex; align-items: center; gap: 10px; width: 220px; height: 32px; margin: 0 2px; padding: 0 6px 0 11px; background: #3c3c3c; border: 1px solid #545454; border-radius: 16px; color: #ddd; font-size: 13px; }
.task-search span { flex: 1; }
.tray { display: flex; align-items: center; justify-content: flex-end; padding-right: 21px; }
.lang { width: 40px; margin: 0 10px 0 12px; text-align: center; }
.tray-icons { display: flex; gap: 7px; }
.clock { width: 72px; margin: 0 8px 0 6px; text-align: right; white-space: nowrap; }
```
